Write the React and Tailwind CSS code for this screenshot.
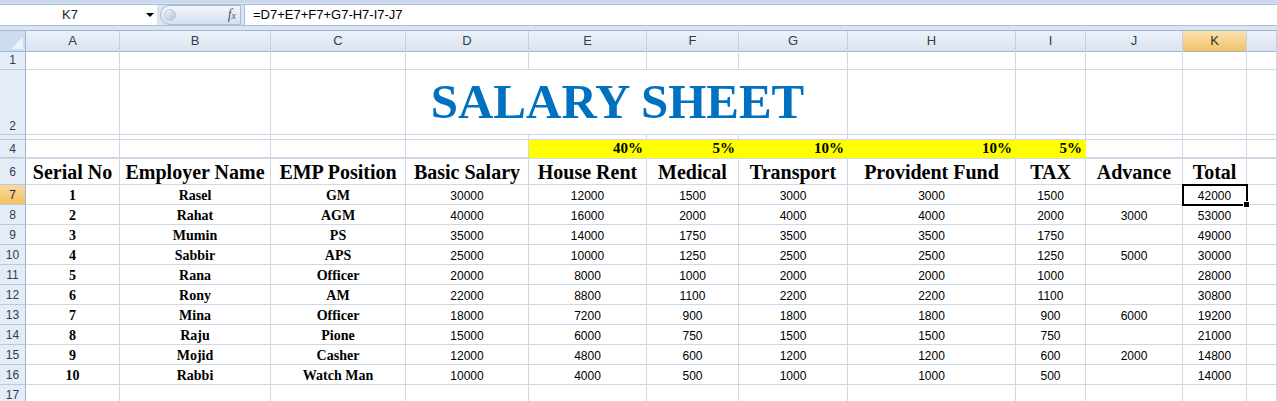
import React from 'react';

// column template: row header, A..K, then the partly visible L
const COLS = 'grid grid-cols-[26px_94px_151px_135px_123px_118px_92px_109px_168px_70px_97px_64px_1fr]';

const letters = ['A', 'B', 'C', 'D', 'E', 'F', 'G', 'H', 'I', 'J', 'K', ''];

const rows = [
  [1, 'Rasel', 'GM', 30000, 12000, 1500, 3000, 3000, 1500, '', 42000],
  [2, 'Rahat', 'AGM', 40000, 16000, 2000, 4000, 4000, 2000, 3000, 53000],
  [3, 'Mumin', 'PS', 35000, 14000, 1750, 3500, 3500, 1750, '', 49000],
  [4, 'Sabbir', 'APS', 25000, 10000, 1250, 2500, 2500, 1250, 5000, 30000],
  [5, 'Rana', 'Officer', 20000, 8000, 1000, 2000, 2000, 1000, '', 28000],
  [6, 'Rony', 'AM', 22000, 8800, 1100, 2200, 2200, 1100, '', 30800],
  [7, 'Mina', 'Officer', 18000, 7200, 900, 1800, 1800, 900, 6000, 19200],
  [8, 'Raju', 'Pione', 15000, 6000, 750, 1500, 1500, 750, '', 21000],
  [9, 'Mojid', 'Casher', 12000, 4800, 600, 1200, 1200, 600, 2000, 14800],
  [10, 'Rabbi', 'Watch Man', 10000, 4000, 500, 1000, 1000, 500, '', 14000],
];

const headings = ['Serial No', 'Employer Name', 'EMP Position', 'Basic Salary', 'House Rent', 'Medical', 'Transport', 'Provident Fund', 'TAX', 'Advance', 'Total'];

const serif = "font-['Liberation_Serif','Times_New_Roman',serif]";
const sans = "font-['Liberation_Sans',Arial,sans-serif]";

function RowHead({ n, active, bottom }) {
  return (
    <div
      className={`flex justify-center text-[12px] leading-none border-r border-b border-r-[#9eb6ce] border-b-[#b9cadf] ${sans} ${
        bottom ? 'items-end pb-[2px]' : 'items-center'
      } ${active ? 'bg-gradient-to-b from-[#f9d99f] to-[#f1c15f] text-[#1e2a38]' : 'bg-[#e4ecf7] text-[#2c3e55]'}`}
    >
      {n}
    </div>
  );
}

function Cell({ children, className = '' }) {
  return <div className={`border-r border-b border-[#d0d7e5] flex min-w-0 ${className}`}>{children}</div>;
}

function FormulaBar() {
  return (
    <div className="h-[30px] bg-[#dbe5f1] border-t-[3px] border-t-[#c9d8ec] flex flex-col">
      <div className="h-[22px] mt-[1px] flex border-y border-[#a9bdd6] bg-white">
        <div className={`w-[157px] flex items-center relative ${sans} text-[13px] text-[#222]`}>
          <span className="w-[140px] text-center">K7</span>
          <span className="absolute left-[146px] top-[8px] w-0 h-0 border-l-[4px] border-r-[4px] border-t-[4px] border-l-transparent border-r-transparent border-t-black" />
        </div>
        <div className="w-[87px] bg-[#dbe5f1] flex items-center pr-[3px]">
          <div className="ml-[3px] h-[20px] flex-1 rounded-l-full border border-[#a9bdd6] bg-gradient-to-b from-[#f3f7fc] to-[#d4e0ef] flex items-center justify-between pl-[3px] pr-[4px]">
            <span className="w-[12px] h-[12px] rounded-full bg-gradient-to-br from-[#f4f6f9] to-[#b5bfcb] border border-[#c2cad5]" />
            <span className={`${serif} italic text-[14px] text-[#555] leading-none`}>
              f<span className="text-[10px]">x</span>
            </span>
          </div>
        </div>
        <div className={`flex-1 border-l border-[#a9bdd6] flex items-center pl-[8px] ${sans} text-[13px] text-black`}>
          =D7+E7+F7+G7-H7-I7-J7
        </div>
      </div>
      <div className="flex-1" />
    </div>
  );
}

function ColumnHeader() {
  return (
    <div className={`${COLS} h-[20px] border-t border-[#9eb6ce]`}>
      <div className="bg-[#cddcef] border-r border-b border-[#9eb6ce] relative">
        <svg className="absolute right-[2px] bottom-[2px]" width="12" height="12" viewBox="0 0 12 12">
          <polygon points="12,0 12,12 0,12" fill="#eef3fa" />
        </svg>
      </div>
      {letters.map((l, i) => (
        <div
          key={i}
          className={`flex items-center justify-center text-[13px] border-r border-b border-r-[#c2d1e4] border-b-[#9eb6ce] ${sans} ${
            l === 'K' ? 'bg-gradient-to-b from-[#fbe2b0] to-[#f2c263] text-[#2b2b2b]' : 'bg-gradient-to-b from-[#edf2f9] to-[#d9e3f1] text-[#2f3f52]'
          }`}
        >
          {l}
        </div>
      ))}
    </div>
  );
}

function BlankCells({ count, from = 0 }) {
  return Array.from({ length: count }, (_, i) => <Cell key={from + i} />);
}

export default function App() {
  const pct = { 4: '40%', 5: '5%', 6: '10%', 7: '10%', 8: '5%' };

  return (
    <div className="w-[1277px] h-[401px] overflow-hidden bg-white">
      <FormulaBar />
      <ColumnHeader />

      {/* row 1 */}
      <div className={`${COLS} h-[20px]`}>
        <RowHead n={1} />
        <BlankCells count={12} />
      </div>

      {/* row 2 - title merged D:G */}
      <div className={`${COLS} h-[65px]`}>
        <RowHead n={2} bottom />
        <Cell />
        <Cell />
        <Cell />
        <Cell className="col-span-4 items-end justify-center pb-[8px]">
          <span className={`${serif} font-bold text-[49px] leading-none text-[#0070c0] -translate-x-[9px]`}>SALARY SHEET</span>
        </Cell>
        <BlankCells count={5} />
      </div>

      {/* row 3 (almost hidden) */}
      <div className={`${COLS} h-[5px]`}>
        <RowHead n="" />
        <BlankCells count={12} />
      </div>

      {/* row 4 - percentages */}
      <div className={`${COLS} h-[18px]`}>
        <RowHead n={4} />
        {Array.from({ length: 12 }, (_, i) =>
          pct[i] ? (
            <div key={i} className={`bg-[#ffff00] border-r border-b border-[#ffff00] flex items-end justify-end pr-[3px] pb-[1px] ${serif} font-bold text-[15px] leading-none`}>
              {pct[i]}
            </div>
          ) : (
            <Cell key={i} />
          )
        )}
      </div>

      {/* row 6 - headings */}
      <div className={`${COLS} h-[27px] border-t border-[#d0d7e5]`}>
        <RowHead n={6} />
        {headings.map((h) => (
          <Cell key={h} className={`items-end justify-center pb-[2px] ${serif} font-bold text-[20px] leading-none whitespace-nowrap`}>
            {h}
          </Cell>
        ))}
        <Cell />
      </div>

      {/* data rows */}
      {rows.map((r, ri) => (
        <div key={ri} className={`${COLS} h-[20px]`}>
          <RowHead n={ri + 7} active={ri === 0} />
          {r.map((v, ci) => (
            <Cell
              key={ci}
              className={`items-center justify-center whitespace-nowrap leading-none ${
                ci < 3 ? `${serif} font-bold text-[14px] pt-[2px]` : `${sans} text-[12px] pt-[2px]`
              } ${ri === 0 && ci === 10 ? 'relative' : ''}`}
            >
              {v}
              {ri === 0 && ci === 10 && (
                <>
                  <span className="absolute -left-[1px] -top-[1px] w-[66px] h-[22px] border-2 border-black" />
                  <span className="absolute -right-[4px] -bottom-[4px] w-[7px] h-[7px] bg-black border border-white" />
                </>
              )}
            </Cell>
          ))}
          <Cell />
        </div>
      ))}

      {/* row 17 */}
      <div className={`${COLS} h-[20px]`}>
        <RowHead n={17} />
        <BlankCells count={12} />
      </div>
    </div>
  );
}
